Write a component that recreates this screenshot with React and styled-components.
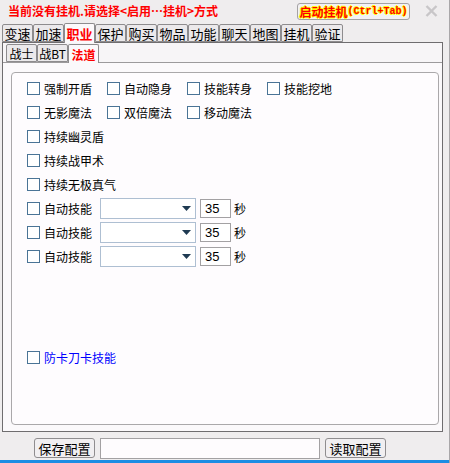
import React from "react";
import styled, { createGlobalStyle } from "styled-components";

const GlobalStyle = createGlobalStyle`
  html, body {
    margin: 0;
    padding: 0;
    background: #efedee;
  }
  body {
    font-family: "Noto Sans CJK SC", "Noto Sans", sans-serif;
    font-size: 12px;
    color: #000;
  }
`;

const mainTabs = ["变速", "加速", "职业", "保护", "购买", "物品", "功能", "聊天", "地图", "挂机", "验证"];
const subTabs = ["战士", "战BT", "法道"];
const checkGrid = [
  ["强制开盾", "自动隐身", "技能转身", "技能挖地"],
  ["无影魔法", "双倍魔法", "移动魔法"],
];
const singleChecks = ["持续幽灵盾", "持续战甲术", "持续无极真气"];

function Check({ label, blue }) {
  return (
    <CheckLabel $blue={blue}>
      <Box />
      <span>{label}</span>
    </CheckLabel>
  );
}

function App() {
  return (
    <Window>
      <GlobalStyle />
      <Header>
        <Title>当前没有挂机.请选择&lt;启用…挂机&gt;方式</Title>
        <StartButton>
          启动挂机<Mono>(Ctrl+Tab)</Mono>
        </StartButton>
        <Close>
          <svg width="13" height="12" viewBox="0 0 13 12">
            <path d="M1.5 1 L11.5 11 M11.5 1 L1.5 11" stroke="#c8c6c8" strokeWidth="2.4" fill="none" />
          </svg>
        </Close>
      </Header>
      <TabStrip $pad={2}>
        {mainTabs.map((t) => (
          <Tab key={t} $active={t === "职业"} $size={13}>
            {t}
          </Tab>
        ))}
      </TabStrip>
      <Page>
        <TabStrip $pad={3} $h={19}>
          {subTabs.map((t) => (
            <Tab key={t} $active={t === "法道"} $small $size={12}>
              {t}
            </Tab>
          ))}
        </TabStrip>
        <SubPage>
          <Group>
            {checkGrid.map((row, i) => (
              <GridRow key={i}>
                {row.map((c) => (
                  <Check key={c} label={c} />
                ))}
              </GridRow>
            ))}
            {singleChecks.map((c) => (
              <Row key={c}>
                <Check label={c} />
              </Row>
            ))}
            {[0, 1, 2].map((i) => (
              <Row key={i}>
                <Check label="自动技能" />
                <Combo>
                  <svg width="9" height="5" viewBox="0 0 9 5">
                    <path d="M0 0 H9 L4.5 5 Z" fill="#1f3a52" />
                  </svg>
                </Combo>
                <NumBox>35</NumBox>
                <Unit>秒</Unit>
              </Row>
            ))}
            <Row $top={77}>
              <Check label="防卡刀卡技能" blue />
            </Row>
          </Group>
        </SubPage>
      </Page>
      <Footer>
        <Button>保存配置</Button>
        <TextField />
        <Button>读取配置</Button>
      </Footer>
      <Taskbar />
    </Window>
  );
}

export default App;

const Window = styled.div`
  width: 450px;
  height: 463px;
  display: flex;
  flex-direction: column;
  background: #efedee;
  box-sizing: border-box;
  border-right: 1px solid #a9a7a9;
  overflow: hidden;
`;

const Header = styled.div`
  height: 22px;
  display: flex;
  align-items: center;
  padding: 0 11px 0 8px;
`;

const Title = styled.div`
  color: #ff0000;
  font-weight: bold;
  font-size: 12px;
  line-height: 16px;
  white-space: nowrap;
`;

const StartButton = styled.div`
  margin-left: auto;
  width: 113px;
  height: 17px;
  box-sizing: border-box;
  border: 1px solid #a4a2a4;
  border-radius: 3px;
  background: #f3f1f3;
  display: flex;
  align-items: center;
  justify-content: center;
  color: #ff0000;
  font-weight: bold;
  font-size: 12px;
  white-space: nowrap;
  text-shadow: 1px 0 0 #ffff00, -1px 0 0 #ffff00, 0 1px 0 #ffff00, 0 -1px 0 #ffff00;
`;

const Mono = styled.span`
  font-family: "Liberation Mono", monospace;
  font-size: 10px;
`;

const Close = styled.div`
  margin-left: 15px;
  display: flex;
  align-items: center;
`;

const TabStrip = styled.div`
  height: ${(p) => p.$h || 20}px;
  display: flex;
  align-items: flex-end;
  padding-left: ${(p) => p.$pad}px;
`;

const Tab = styled.div`
  position: relative;
  z-index: ${(p) => (p.$active ? 1 : 0)};
  width: 31px;
  height: ${(p) => (p.$active ? (p.$small ? 19 : 20) : 18)}px;
  margin-bottom: ${(p) => (p.$active ? -1 : 0)}px;
  box-sizing: border-box;
  border: 1px solid #8e8c8e;
  border-bottom: ${(p) => (p.$active ? "none" : "1px solid #8e8c8e")};
  border-radius: 2px 2px 0 0;
  background: ${(p) => (p.$active ? "#fbf9fb" : "#ebe9eb")};
  color: ${(p) => (p.$active ? "#ff0000" : "#000")};
  font-weight: ${(p) => (p.$active ? "bold" : "normal")};
  font-size: ${(p) => p.$size}px;
  display: flex;
  align-items: center;
  justify-content: center;
  white-space: nowrap;
`;

const Page = styled.div`
  height: 390px;
  margin: 0 6px 0 2px;
  box-sizing: border-box;
  border: 1px solid #6f6d6f;
  background: #f7f5f7;
  display: flex;
  flex-direction: column;
`;

const SubPage = styled.div`
  flex: 1;
  border-top: 1px solid #9c9a9c;
  background: #fbf9fb;
  padding: 9px 3px 6px 8px;
  display: flex;
`;

const Group = styled.div`
  flex: 1;
  border: 1px solid #aaa8aa;
  border-radius: 4px;
  background: #fefcfe;
  padding: 3px 0 0 15px;
  display: flex;
  flex-direction: column;
`;

const GridRow = styled.div`
  height: 24px;
  display: grid;
  grid-template-columns: repeat(4, 80px);
  align-items: center;
`;

const Row = styled.div`
  height: 24px;
  margin-top: ${(p) => p.$top || 0}px;
  display: flex;
  align-items: center;
`;

const CheckLabel = styled.label`
  display: flex;
  align-items: center;
  gap: 4px;
  color: ${(p) => (p.$blue ? "#0000ff" : "#000")};
  font-size: 12px;
  white-space: nowrap;
`;

const Box = styled.span`
  width: 13px;
  height: 13px;
  box-sizing: border-box;
  border: 1px solid #4a7496;
  background: #fff;
`;

const Combo = styled.div`
  width: 96px;
  height: 21px;
  margin-left: 8px;
  box-sizing: border-box;
  border: 1px solid #aebfd2;
  background: #fff;
  display: flex;
  align-items: center;
  justify-content: flex-end;
  padding-right: 4px;
`;

const NumBox = styled.div`
  width: 31px;
  height: 19px;
  margin-left: 4px;
  box-sizing: border-box;
  border: 1px solid #a3a1a3;
  background: #fff;
  padding-left: 4px;
  font-family: "Liberation Sans", Arial, sans-serif;
  font-size: 13px;
  line-height: 17px;
`;

const Unit = styled.span`
  margin-left: 3px;
  font-size: 12px;
`;

const Footer = styled.div`
  height: 28px;
  display: flex;
  align-items: flex-start;
  padding: 6px 0 0 34px;
  box-sizing: border-box;
`;

const Button = styled.div`
  width: 61px;
  height: 20px;
  box-sizing: border-box;
  border: 1px solid #8f8d8f;
  border-radius: 3px;
  background: #f1eff1;
  display: flex;
  align-items: center;
  justify-content: center;
  font-size: 13px;
`;

const TextField = styled.div`
  width: 220px;
  height: 21px;
  margin: 0 5px;
  box-sizing: border-box;
  border: 1px solid #a3a1a3;
  background: #fefcfe;
`;

const Taskbar = styled.div`
  height: 3px;
  background: #1c8de4;
  margin-right: -1px;
`;
